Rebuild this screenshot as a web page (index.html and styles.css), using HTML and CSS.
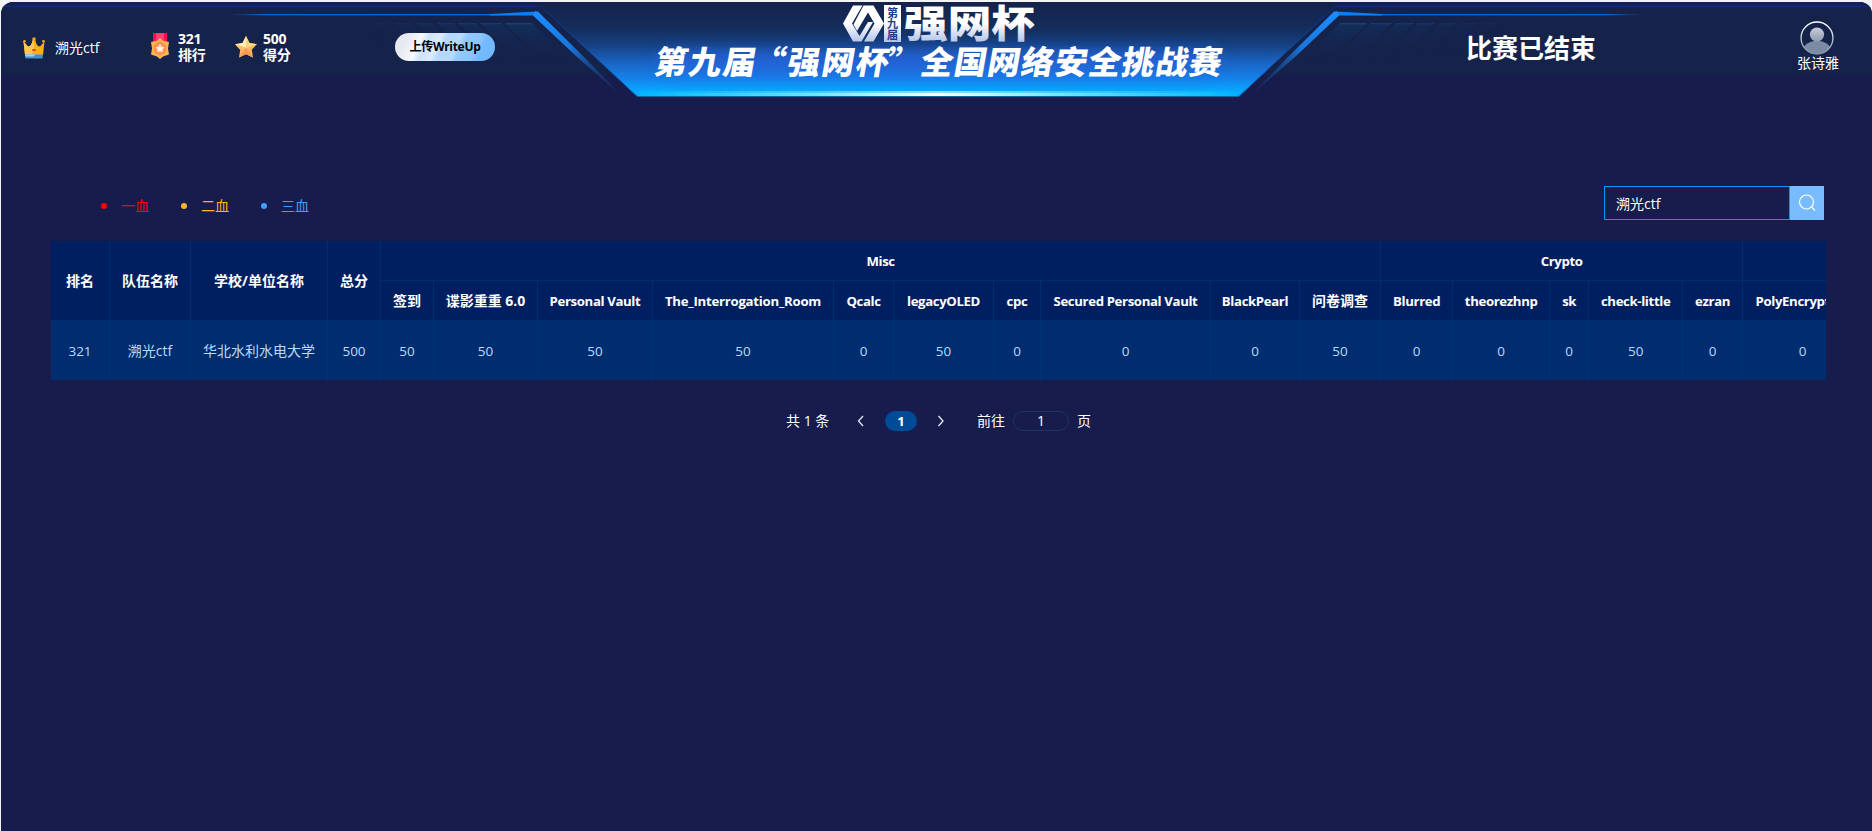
FILE: index.html
```html
<!DOCTYPE html>
<html lang="zh-CN">
<head>
<meta charset="utf-8">
<title>第九届“强网杯”全国网络安全挑战赛</title>
<link rel="stylesheet" href="styles.css">
</head>
<body>
<div class="app">
  <header class="header">
    <svg class="banner" width="1871" height="98" viewBox="1 2 1871 98">
      <defs>
        <linearGradient id="fill" x1="0" y1="2" x2="0" y2="96" gradientUnits="userSpaceOnUse">
          <stop offset="0" stop-color="#15224a"/><stop offset=".28" stop-color="#142d5c"/><stop offset=".45" stop-color="#15407f"/><stop offset=".62" stop-color="#1a5fbc"/><stop offset=".82" stop-color="#1583ec"/><stop offset=".95" stop-color="#06a9fe"/><stop offset="1" stop-color="#06a9fe"/>
        </linearGradient>
        <linearGradient id="shine" x1="637" y1="0" x2="1239" y2="0" gradientUnits="userSpaceOnUse">
          <stop offset="0" stop-color="#00b4ff"/><stop offset=".3" stop-color="#6fe6ff"/><stop offset=".5" stop-color="#fff"/><stop offset=".7" stop-color="#6fe6ff"/><stop offset="1" stop-color="#00b4ff"/>
        </linearGradient>
        <linearGradient id="thin" x1="230" y1="0" x2="500" y2="0" gradientUnits="userSpaceOnUse">
          <stop offset="0" stop-color="#0761c4" stop-opacity="0"/><stop offset=".12" stop-color="#0761c4"/><stop offset="1" stop-color="#0a6ad6"/>
        </linearGradient>
        <linearGradient id="diag" x1="536" y1="12" x2="624" y2="98" gradientUnits="userSpaceOnUse">
          <stop offset="0" stop-color="#1b8cff"/><stop offset=".4" stop-color="#1878de"/><stop offset=".7" stop-color="#1a4a93" stop-opacity=".6"/><stop offset="1" stop-color="#1a4a93" stop-opacity="0"/>
        </linearGradient>
        <linearGradient id="edge" x1="541" y1="6" x2="637" y2="96" gradientUnits="userSpaceOnUse">
          <stop offset="0" stop-color="#0d2f86"/><stop offset="1" stop-color="#0870db"/>
        </linearGradient>
        <linearGradient id="slat" x1="0" y1="23" x2="0" y2="66" gradientUnits="userSpaceOnUse">
          <stop offset="0" stop-color="#1b4c78" stop-opacity=".9"/><stop offset=".05" stop-color="#12305f" stop-opacity=".8"/><stop offset="1" stop-color="#15224a" stop-opacity="0"/>
        </linearGradient>
        <linearGradient id="logoFill" x1="0" y1="4" x2="0" y2="42" gradientUnits="userSpaceOnUse">
          <stop offset=".5" stop-color="#fff"/><stop offset="1" stop-color="#b3c2e8"/>
        </linearGradient>
        <filter id="glow" x="-10%" y="-60%" width="120%" height="220%"><feGaussianBlur stdDeviation="7"/></filter>
        <g id="outline">
          <path d="M1 6.500H541" fill="none" stroke="#0d2f86"/>
          <path d="M541 6.500L637 96" fill="none" stroke="url(#edge)"/>
        </g>
        <g id="wing">
          <rect x="230" y="14" width="275" height="1.300" fill="url(#thin)"/>
          <path d="M490 14L536 11.500L538 15.500H490Z" fill="#0d7ff0"/>
          <path d="M535 11.500H538L585 58L624 98L577 57L533 15.500Z" fill="url(#diag)"/>
          <g fill="url(#slat)">
            <path d="M505 23H532L575 66H548Z"/>
            <path d="M480 23H501L544 66H523Z" opacity=".85"/>
            <path d="M458 23H476L519 66H501Z" opacity=".7"/>
            <path d="M437 23H454L497 66H480Z" opacity=".55"/>
            <path d="M416 23H432L475 66H459Z" opacity=".4"/>
            <path d="M395 23H411L454 66H438Z" opacity=".28"/>
            <path d="M374 23H390L433 66H417Z" opacity=".18"/>
            <path d="M353 23H369L412 66H396Z" opacity=".1"/>
          </g>
        </g>
      </defs>
      <path d="M541 2L541 6L637 96.500H1239L1335 6V2Z" fill="url(#fill)"/>
      <path d="M637 91H1239L1235 96H640Z" fill="url(#shine)" opacity=".6"/>
      <path d="M640 94.500H1236" stroke="url(#shine)" stroke-width="3"/>
      <use href="#outline"/>
      <use href="#outline" transform="translate(1876 0) scale(-1 1)"/>
      <use href="#wing"/>
      <use href="#wing" transform="translate(1872 0) scale(-1 1)"/>
      <rect x="660" y="48" width="560" height="26" rx="13" fill="#2a63e8" opacity=".5" filter="url(#glow)"/>
      <g fill="url(#logoFill)">
        <path d="M853 5.500H862.500L852 23.500L859.500 36L868 22H873L861.500 41.500H853L843 23.500Z"/>
        <path d="M863.500 5.500H873.500L884 23.500L873.500 41.500H864L874.500 23.500L868 12.500L857 31L853.500 24.500Z"/>
        <rect x="884" y="5" width="17" height="37"/>
      </g>
      <g class="logo-tag" text-anchor="middle">
        <text x="892.500" y="16.500">第</text><text x="892.500" y="28">九</text><text x="892.500" y="39">届</text>
      </g>
      <text class="logo-word" x="904" y="37" textLength="131" lengthAdjust="spacingAndGlyphs" fill="url(#logoFill)">强网杯</text>
      <g class="banner-title" transform="translate(653 74) skewX(-10)">
        <text x="0" y="0" textLength="101">第九届</text>
        <text x="98" y="0">“</text>
        <text x="133" y="0" textLength="101">强网杯</text>
        <text x="232" y="0">”</text>
        <text x="266" y="0" textLength="301">全国网络安全挑战赛</text>
      </g>
    </svg>

    <div class="team">
      <svg width="22" height="22" viewBox="0 0 22 22">
        <path d="M.5 4.500L5 9.500Q8.500 10 10 2H12Q13.500 10 17 9.500L21.500 4.500L20 18H2Z" fill="#fdb00f"/>
        <path d="M.5 4.500L5 9.500Q8.500 10 10 2H11V12L9 18H2Z" fill="#fcc65a"/>
        <circle cx="11" cy="2" r="1.800" fill="#e9a51c"/><circle cx="1.500" cy="4.200" r="1.300" fill="#f3ad1c"/><circle cx="20.500" cy="4.200" r="1.300" fill="#f3ad1c"/>
        <ellipse cx="11" cy="13" rx="2" ry="1" fill="#e03a1d"/>
        <path d="M2 17.500H20L19.500 21.500H2.500Z" fill="#4192cd"/><path d="M2 17.500H13L10 19.500H2.200Z" fill="#9dd4ee"/>
      </svg>
      <span>溯光ctf</span>
    </div>
    <div class="stat stat-rank">
      <svg width="20" height="27" viewBox="0 0 20 27">
        <path d="M3 0H17V8H3Z" fill="#f5104f"/><path d="M6 0H14V7H6Z" fill="#ff3d73"/>
        <path d="M10 5L13 7.500L19 9L18 15.500L19 21.500L13 23.500L10 26L7 23.500L1 21.500L2 15.500L1 9L7 7.500Z" fill="#ffb450"/>
        <circle cx="10" cy="15.500" r="6.200" fill="#ff8352"/>
        <circle cx="10" cy="15.500" r="4.600" fill="#ffa163"/>
        <path d="M10 11L11.400 13.900L14.500 14.300L12.200 16.500L12.800 19.600L10 18L7.200 19.600L7.800 16.500L5.500 14.300L8.600 13.900Z" fill="#fff4e2"/>
      </svg>
      <div class="stat-text"><b>321</b><b>排行</b></div>
    </div>
    <div class="stat stat-score">
      <svg width="22" height="22" viewBox="0 0 22 22">
        <path d="M11 0L14.500 7L22 8.200L16.800 13.700L18 21.500L11 18.200L4 21.500L5.200 13.700L0 8.200L7.500 7Z" fill="#ffb45e"/>
        <path d="M11 0V12L0 8.200L7.500 7Z" fill="#ffeeb5"/><path d="M11 0L14.500 7L11 12Z" fill="#ffd27a"/>
        <path d="M11 12L18 21.500L11 18.200L4 21.500Z" fill="#ff9656"/><path d="M0 8.200L11 12L5.200 13.700Z" fill="#ffbd6c"/><path d="M14.500 7L22 8.200L11 12Z" fill="#ffdc8c"/>
      </svg>
      <div class="stat-text"><b>500</b><b>得分</b></div>
    </div>
    <button class="upload">上传WriteUp</button>
    <div class="status">比赛已结束</div>
    <div class="user">
      <svg width="34" height="34" viewBox="0 0 32 32">
        <defs>
          <linearGradient id="av" x1="0" y1="0" x2="0" y2="1"><stop offset="0" stop-color="#fff"/><stop offset="1" stop-color="#8292a6"/></linearGradient>
          <linearGradient id="hd" x1="0" y1="0" x2="0" y2="1"><stop offset="0" stop-color="#c8cdd8"/><stop offset="1" stop-color="#8e9bb0"/></linearGradient>
          <clipPath id="avc"><circle cx="16" cy="16" r="15"/></clipPath>
        </defs>
        <ellipse cx="16" cy="28" rx="13" ry="9.500" fill="#7a8ba3" clip-path="url(#avc)"/>
        <circle cx="16" cy="12.700" r="6.700" fill="url(#hd)"/>
        <circle cx="16" cy="16" r="15" fill="none" stroke="url(#av)" stroke-width="1.300"/>
      </svg>
      <span>张诗雅</span>
    </div>
  </header>

  <main class="main">
    <div class="toolbar">
      <ul class="legend">
        <li class="first">一血</li>
        <li class="second">二血</li>
        <li class="third">三血</li>
      </ul>
      <div class="search">
        <input class="search-input" type="text" value="溯光ctf">
        <button class="search-btn" aria-label="搜索">
          <svg width="18" height="18" viewBox="0 0 18 18" fill="none" stroke="#fff" stroke-width="1.200"><circle cx="8.500" cy="8" r="7"/><path d="M13.500 13L17 16.500"/></svg>
        </button>
      </div>
    </div>

    <div class="table-wrap">
      <table class="board">
        <colgroup>
          <col class="w59"><col class="w81"><col class="w137"><col class="w53">
          <col class="w53"><col class="w104"><col class="w115"><col class="w181"><col class="w60"><col class="w100"><col class="w47"><col class="w170"><col class="w89"><col class="w81">
          <col class="w72"><col class="w97"><col class="w39"><col class="w94"><col class="w60">
          <col class="w120">
        </colgroup>
        <thead>
          <tr>
            <th class="zh" rowspan="2">排名</th><th class="zh" rowspan="2">队伍名称</th><th class="zh" rowspan="2">学校/单位名称</th><th class="zh" rowspan="2">总分</th>
            <th colspan="10">Misc</th><th colspan="5">Crypto</th><th></th>
          </tr>
          <tr>
            <th class="zh">签到</th><th class="zh">谍影重重 6.0</th><th>Personal Vault</th><th class="wide">The_Interrogation_Room</th><th>Qcalc</th><th>legacyOLED</th><th>cpc</th><th>Secured Personal Vault</th><th>BlackPearl</th><th class="zh">问卷调查</th>
            <th>Blurred</th><th>theorezhnp</th><th>sk</th><th>check-little</th><th>ezran</th><th>PolyEncryption</th>
          </tr>
        </thead>
        <tbody>
          <tr>
            <td>321</td><td class="zh">溯光ctf</td><td class="zh">华北水利水电大学</td><td>500</td>
            <td>50</td><td>50</td><td>50</td><td>50</td><td>0</td><td>50</td><td>0</td><td>0</td><td>0</td><td>50</td>
            <td>0</td><td>0</td><td>0</td><td>50</td><td>0</td><td>0</td>
          </tr>
        </tbody>
      </table>
    </div>

    <nav class="pager">
      <span class="total">共 1 条</span>
      <svg class="prev" width="8" height="12" viewBox="0 0 8 12"><path d="M6 1L1.500 6L6 11"/></svg>
      <span class="page">1</span>
      <svg class="next" width="8" height="12" viewBox="0 0 8 12"><path d="M1.500 1L6 6L1.500 11"/></svg>
      <span class="goto">前往</span>
      <span class="jump">1</span>
      <span>页</span>
    </nav>
  </main>
</div>
</body>
</html>
```
FILE: styles.css
```css
* { box-sizing: border-box; }
html, body { margin: 0; height: 100%; }
body {
  padding: 2px 0 0 1px;
  background: #f3f4f5;
  font: 14px/16px "Open Sans", "Noto Sans CJK SC", sans-serif;
  color: #fff;
  overflow: hidden;
}
button, input { font: inherit; border: 0; padding: 0; margin: 0; }
svg { display: block; flex: none; }

.app {
  height: 829px;
  background: #171c4c;
  border-radius: 12px 12px 0 0;
  overflow: hidden;
}

/* Header */
.header {
  position: relative;
  display: flex;
  height: 73px;
  padding-left: 22px;
  background: #15224a;
}
.banner { position: absolute; left: 0; top: 0; }
.header > :not(.banner) { position: relative; }
.logo-tag { font: 700 11px "Noto Sans CJK SC", sans-serif; fill: #1d3a8c; }
.logo-word { font: 900 38px "Noto Sans CJK SC", sans-serif; }
.banner-title { font: 900 32.500px "Noto Sans CJK SC", sans-serif; fill: #fff; }

.team { display: flex; gap: 10px; width: 127px; height: 22px; margin-top: 35px; }
.team span { line-height: 21px; }
.stat { display: flex; width: 85px; }
.stat-rank { gap: 8px; }
.stat-rank svg { margin-top: 31px; }
.stat-score { gap: 6px; }
.stat-score svg { margin-top: 34px; }
.stat-text { display: flex; flex-direction: column; margin-top: 29px; }
.stat-text b { font-weight: 700; letter-spacing: -.2px; }
.upload {
  width: 100px;
  height: 28px;
  margin: 31px 0 0 75px;
  border-radius: 14px;
  background: linear-gradient(115deg, #e6e9ef 12%, #f5faff 25%, #cfe2f8 32%, #dcecfd 42%, #b4d7fb 48%, #b7dafc 60%, #94c8fc 65%, #8bc4fd 78%, #73b9ff 84%);
  color: #000;
  font-size: 12px;
  font-weight: 700;
  letter-spacing: -.3px;
}
.status {
  margin: 29px 0 0 971px;
  width: 130px;
  font: 700 26px/32px "Noto Sans CJK SC", sans-serif;
  white-space: nowrap;
}
.user {
  display: flex;
  flex-direction: column;
  align-items: center;
  width: 44px;
  margin: 19px 0 0 199px;
}
.user span { white-space: nowrap; transform: translateX(1px); }

/* Filter row */
.main { padding: 111px 48px 0 50px; }
.toolbar { display: flex; justify-content: space-between; height: 34px; }
.legend { display: flex; margin: 11px 0 0 50px; padding: 0; list-style: none; }
.legend li { display: flex; align-items: center; gap: 14px; width: 80px; height: 18px; }
.legend li::before { content: ""; width: 6px; height: 6px; border-radius: 50%; background: currentColor; }
.first { color: #f00; }
.second { color: #ffb51f; }
.third { color: #409eff; }
.search { display: flex; width: 220px; }
.search-input {
  width: 186px;
  height: 34px;
  padding-left: 11px;
  border: 1px solid #0c94ff;
  background: transparent;
  color: #fff;
}
.search-btn {
  display: flex;
  align-items: center;
  justify-content: center;
  width: 34px;
  height: 34px;
  background: #79bbff;
}

/* Scoreboard */
.table-wrap { width: 1775px; height: 139px; margin-top: 21px; overflow: hidden; }
.board { width: 1812px; table-layout: fixed; border-collapse: separate; border-spacing: 0; }
.board th, .board td { padding: 0; border-right: 1px solid #003478; text-align: center; white-space: nowrap; }
.board th {
  background: #001f60;
  font-size: 13.200px;
  font-weight: 700;
  letter-spacing: -.36px;
  border-right-color: #002c70;
}
.board th.wide { letter-spacing: -.25px; }
.board thead tr:first-child th { height: 40px; }
.board thead tr:first-child th[colspan], .board thead tr:first-child th:last-child { border-bottom: 1px solid #002c70; }
.board thead tr:last-child th { height: 39px; }
.board td { height: 60px; padding-top: 1px; background: #002c70; color: #b9dcfb; font-size: 13.500px; }
.board th.zh, .board td.zh { font-size: 14px; letter-spacing: 0; }
.w39 { width: 39px; } .w47 { width: 47px; } .w53 { width: 53px; } .w59 { width: 59px; }
.w60 { width: 60px; } .w72 { width: 72px; } .w81 { width: 81px; } .w89 { width: 89px; }
.w94 { width: 94px; } .w97 { width: 97px; } .w100 { width: 100px; } .w104 { width: 104px; }
.w115 { width: 115px; } .w120 { width: 120px; } .w137 { width: 137px; } .w170 { width: 170px; } .w181 { width: 181px; }

/* Pagination */
.pager { display: flex; align-items: center; height: 20px; margin: 31px 0 0 735px; }
.pager path { fill: none; stroke: #e6e8ee; stroke-width: 1.300; }
.total { width: 71px; }
.page { width: 32px; height: 20px; margin: 0 20px; border-radius: 10px; background: #004b98; text-align: center; font-weight: 700; font-size: 13px; line-height: 20px; }
.goto { margin-left: 32px; width: 36px; }
.jump { width: 56px; height: 20px; margin-right: 8px; border: 1px solid #1f3566; border-radius: 10px; text-align: center; line-height: 18px; }
```
